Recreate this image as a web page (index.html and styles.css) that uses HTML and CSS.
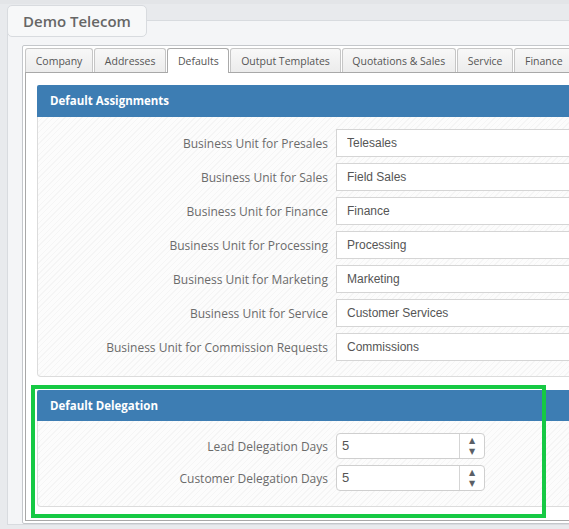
FILE: index.html
```html
<!DOCTYPE html>
<html>

<head>
    <title>Demo Telecom - Defaults</title>
    <link rel="stylesheet" href="styles.css">
</head>

<body>
    <div class="company">
        <div class="company-title">Demo Telecom</div>
        <div class="company-body">
            <div class="tabs-frame">
                <ul class="tabs">
                    <li>Company</li>
                    <li>Addresses</li>
                    <li class="active">Defaults</li>
                    <li>Output Templates</li>
                    <li>Quotations &amp; Sales</li>
                    <li>Service</li>
                    <li>Finance</li>
                    <li>Provisioning</li>
                </ul>
                <div class="tab-content">
                    <div class="section">
                        <div class="section-head">Default Assignments</div>
                        <div class="section-body">
                            <div class="field">
                                <label>Business Unit for Presales</label>
                                <input class="text-input" type="text" value="Telesales" readonly>
                            </div>
                            <div class="field">
                                <label>Business Unit for Sales</label>
                                <input class="text-input" type="text" value="Field Sales" readonly>
                            </div>
                            <div class="field">
                                <label>Business Unit for Finance</label>
                                <input class="text-input" type="text" value="Finance" readonly>
                            </div>
                            <div class="field">
                                <label>Business Unit for Processing</label>
                                <input class="text-input" type="text" value="Processing" readonly>
                            </div>
                            <div class="field">
                                <label>Business Unit for Marketing</label>
                                <input class="text-input" type="text" value="Marketing" readonly>
                            </div>
                            <div class="field">
                                <label>Business Unit for Service</label>
                                <input class="text-input" type="text" value="Customer Services" readonly>
                            </div>
                            <div class="field">
                                <label>Business Unit for Commission Requests</label>
                                <input class="text-input" type="text" value="Commissions" readonly>
                            </div>
                        </div>
                    </div>

                    <div class="section delegation">
                        <div class="section-head">Default Delegation</div>
                        <div class="section-body">
                            <div class="field">
                                <label>Lead Delegation Days</label>
                                <div class="spinner">
                                    <input type="text" value="5"><!--
                                    --><span class="spin-btns"><span>&#9650;</span><span>&#9660;</span></span>
                                </div>
                            </div>
                            <div class="field">
                                <label>Customer Delegation Days</label>
                                <div class="spinner">
                                    <input type="text" value="5"><!--
                                    --><span class="spin-btns"><span>&#9650;</span><span>&#9660;</span></span>
                                </div>
                            </div>
                        </div>
                    </div>
                </div>
            </div>
        </div>
    </div>
    <div class="highlight"></div>
</body>

</html>
```

FILE: styles.css
```css
* {
    box-sizing: border-box;
}

body {
    margin: 0;
    background-color: #e8eaed;
    font-family: "Open Sans", sans-serif;
    overflow: hidden;
}

.company {
    width: 760px;
    border-top: 4px solid #e3e5e8;
    padding: 1px 0 0 7px;
}

.company-title {
    position: relative;
    z-index: 1;
    width: 140px;
    height: 32px;
    margin-bottom: -17px;
    padding-left: 15px;
    line-height: 30px;
    border: 1px solid #d8dbdf;
    border-radius: 5px;
    background-color: #f7f8f9;
    color: #666;
    font-size: 15px;
    font-weight: 600;
}

.company-body {
    border: 1px solid #d8dbdf;
    background-color: #f4f5f7;
    padding: 24px 0 0 14px;
}

.tabs-frame {
    border: 1px solid #c4c7cb;
    border-radius: 2px;
    background-color: #fff;
    padding: 2px;
}

.tabs {
    display: flex;
    list-style: none;
    margin: 0;
    padding: 0;
    white-space: nowrap;
}

.tabs li {
    height: 24px;
    line-height: 25px;
    padding: 0 9.75px;
    margin-right: 1px;
    border: 1px solid #c6c6c6;
    border-bottom: 0;
    border-radius: 3px 3px 0 0;
    background: linear-gradient(#f8f8f8, #ececec);
    font-size: 10.5px;
    color: #555;
}

.tabs li.active {
    position: relative;
    height: 25px;
    margin-bottom: -1px;
    border-color: #aaa;
    background: #fff;
}

.tab-content {
    border: 1px solid #a8a8a8;
    padding: 12px 11px 13px 11px;
}

.section-head {
    height: 32px;
    line-height: 32px;
    padding-left: 13px;
    border-radius: 2px 2px 0 0;
    background-color: #3d7db3;
    color: #fff;
    font-size: 11.5px;
    font-weight: bold;
}

.section-body {
    border: 1px solid #dcdcdc;
    border-top: 0;
    border-radius: 0 0 4px 4px;
    padding: 12px 0 9px 0;
    background: repeating-linear-gradient(135deg, #fcfcfc 0, #fcfcfc 3px, #f5f5f5 3px, #f5f5f5 4px);
}

.delegation {
    margin-top: 13px;
}

.delegation .section-head {
    height: 31px;
    line-height: 31px;
}

.field {
    display: grid;
    grid-template-columns: 290px 1fr;
    column-gap: 8px;
    align-items: center;
    margin-bottom: 6px;
}

label {
    text-align: right;
    font-size: 12px;
    color: #6b6b6b;
}

.text-input {
    height: 28px;
    border: 1px solid #d5d5d5;
    padding: 0 9px 0 10px;
    background-color: #fff;
    font: 12px "Liberation Sans", Arial, sans-serif;
    color: #555;
    outline: none;
}

.spinner {
    display: flex;
    width: 149px;
    height: 26px;
    border: 1px solid #cfcfcf;
    border-radius: 4px;
    background-color: #fff;
    overflow: hidden;
}

.spinner input {
    flex: 1;
    min-width: 0;
    border: 0;
    padding: 0 0 1px 5px;
    background: transparent;
    font: 13px "Liberation Sans", Arial, sans-serif;
    color: #555;
    outline: none;
}

.spin-btns {
    width: 25px;
    border-left: 1px solid #d5d5d5;
    display: flex;
    flex-direction: column;
    align-items: center;
    justify-content: center;
    font-family: "DejaVu Sans", sans-serif;
    font-size: 8px;
    line-height: 11px;
    color: #5a5f66;
}

.highlight {
    position: absolute;
    left: 31px;
    top: 385px;
    width: 515px;
    height: 133px;
    border: 4px solid #16c944;
}
```
